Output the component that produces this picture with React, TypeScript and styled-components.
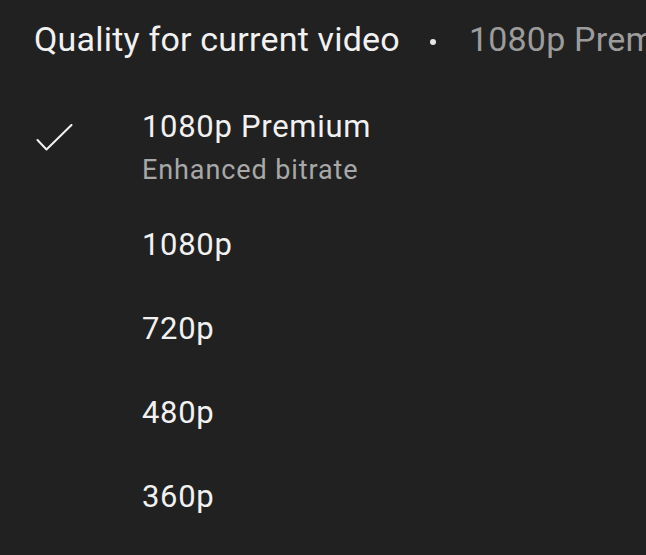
import styled, { createGlobalStyle } from 'styled-components'

const GlobalStyle = createGlobalStyle`
  html, body {
    margin: 0;
    padding: 0;
    background: #212121;
  }
  body {
    font-family: Roboto, 'Noto Sans', sans-serif;
    -webkit-font-smoothing: antialiased;
  }
`

const Sheet = styled.div`
  width: 646px;
  height: 555px;
  background: #212121;
  overflow: hidden;
  color: #f1f1f1;
`

const Header = styled.div`
  display: flex;
  align-items: center;
  height: 78px;
  line-height: 78px;
  padding-left: 34px;
  white-space: nowrap;
  font-size: 34px;
  letter-spacing: 0.2px;
`

const Title = styled.span`
  color: #f1f1f1;
`

const Dot = styled.span`
  width: 6px;
  height: 6px;
  border-radius: 50%;
  background: #e6e6e6;
  margin: 6px 33px 0 30px;
  flex-shrink: 0;
`

const Current = styled.span`
  color: #9c9c9c;
`

const List = styled.ul`
  list-style: none;
  margin: 0;
  padding: 0;
`

const Row = styled.li<{ $selected?: boolean }>`
  display: grid;
  grid-template-columns: 142px 1fr;
  align-items: start;
  padding: ${p => (p.$selected ? '31px 0 17px' : '24px 0')};
`

const CheckCell = styled.div`
  padding: 15px 0 0 36px;
  line-height: 0;
`

const Label = styled.div`
  font-size: 31px;
  line-height: 36px;
  letter-spacing: 0.7px;
  color: #f1f1f1;
`

const Sub = styled.div`
  font-size: 27px;
  line-height: 32px;
  letter-spacing: 0.9px;
  color: #a8a8a8;
  margin-top: 9px;
`

const Check = () => (
  <svg width='37' height='27' viewBox='0 0 37 27'>
    <path d='M1.5 16 L10.5 25.5 L35.5 1' fill='none' stroke='#f1f1f1' strokeWidth='2' strokeLinecap='round' strokeLinejoin='round' />
  </svg>
)

const options = ['1080p', '720p', '480p', '360p']

export default function App() {
  return (
    <Sheet>
      <GlobalStyle />
      <Header>
        <Title>Quality for current video</Title>
        <Dot />
        <Current>1080p Premium</Current>
      </Header>
      <List>
        <Row $selected>
          <CheckCell><Check /></CheckCell>
          <div>
            <Label>1080p Premium</Label>
            <Sub>Enhanced bitrate</Sub>
          </div>
        </Row>
        {options.map(o => (
          <Row key={o}>
            <span />
            <Label>{o}</Label>
          </Row>
        ))}
      </List>
    </Sheet>
  )
}
